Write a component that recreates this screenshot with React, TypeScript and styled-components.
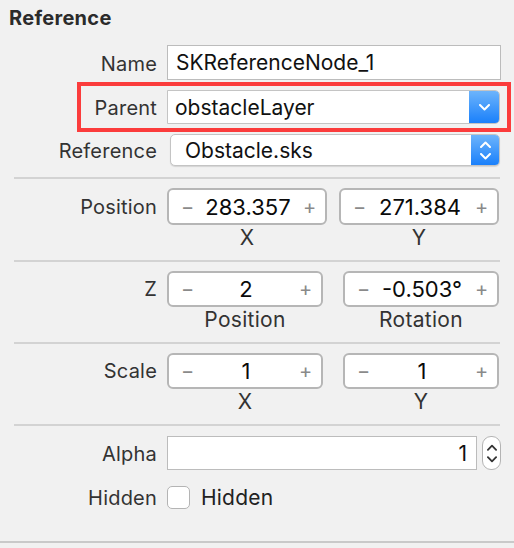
import React from 'react';
import styled, { createGlobalStyle } from 'styled-components';

const GlobalStyle = createGlobalStyle`
  body {
    margin: 0;
    background: #f1f1f1;
    font-family: Inter, "Liberation Sans", sans-serif;
  }
`;

const Panel = styled.div`
  width: 514px;
  height: 548px;
  background: #f1f1f1;
  display: flex;
  flex-direction: column;
  color: #2e2e2e;
`;

const Header = styled.div`
  height: 36px;
  line-height: 36px;
  padding-left: 9px;
  font-size: 20px;
  letter-spacing: 0.3px;
  font-weight: 700;
  color: #2b2b2b;
`;

const Row = styled.div<{ $top: number; $mark?: boolean }>`
  position: relative;
  display: grid;
  grid-template-columns: 157px 1fr;
  column-gap: 10px;
  align-items: center;
  margin-top: ${(p) => p.$top}px;
  padding-right: 13px;
  ${(p) =>
    p.$mark &&
    `
    &::after {
      content: '';
      position: absolute;
      left: 77px;
      right: 3px;
      top: -8px;
      bottom: -8px;
      border: 4px solid #fb3c3c;
      pointer-events: none;
    }
  `}
`;

const Label = styled.div`
  text-align: right;
  font-size: 20px;
  letter-spacing: 0.2px;
  color: #333;
  white-space: nowrap;
  padding-top: 2px;
`;

const TextField = styled.div<{ $align?: string; $width?: number }>`
  box-sizing: border-box;
  height: ${(p) => (p.$width ? 34 : 35)}px;
  width: ${(p) => (p.$width ? `${p.$width}px` : 'auto')};
  background: #fff;
  border: 1px solid #bcbcbc;
  padding: 0 9px 0 8px;
  display: flex;
  align-items: center;
  justify-content: ${(p) => p.$align || 'flex-start'};
  font-size: 21px;
  color: #111;
`;

const Popup = styled.div<{ $rounded?: boolean }>`
  box-sizing: border-box;
  height: ${(p) => (p.$rounded ? 32 : 34)}px;
  margin: ${(p) => (p.$rounded ? '0 1px 0 3px' : '0 1px 0 0')};
  display: flex;
  background: #fff;
  border: 1px solid #c4c4c4;
  border-radius: ${(p) => (p.$rounded ? '5px' : '0 5px 5px 0')};
  box-shadow: ${(p) => (p.$rounded ? '0 1px 1px rgba(0,0,0,0.12)' : 'none')};
  overflow: hidden;
`;

const PopupText = styled.div<{ $indent: number }>`
  flex: 1;
  display: flex;
  align-items: center;
  padding-left: ${(p) => p.$indent}px;
  font-size: 21px;
  color: #111;
`;

const PopupArrow = styled.div<{ $w: number; $double?: boolean }>`
  width: ${(p) => p.$w}px;
  display: flex;
  flex-direction: ${(p) => (p.$double ? 'column' : 'row')};
  gap: 5px;
  align-items: center;
  justify-content: center;
  background: linear-gradient(#6db4fb, #1a80fb);
`;

const Divider = styled.div<{ $top: number; $full?: boolean }>`
  height: 2px;
  background: ${(p) => (p.$full ? '#c9c9c9' : '#d3d3d3')};
  margin: ${(p) => p.$top}px ${(p) => (p.$full ? '0' : '14px')} 0 ${(p) => (p.$full ? '0' : '14px')};
`;

const Pair = styled.div`
  display: flex;
  justify-content: space-between;
  margin-right: 2px;
`;

const Column = styled.div`
  display: flex;
  flex-direction: column;
  align-items: center;
`;

const Stepper = styled.div<{ $w: number; $h: number }>`
  box-sizing: border-box;
  width: ${(p) => p.$w}px;
  height: ${(p) => p.$h}px;
  background: #fff;
  border: 2px solid #b6b6b6;
  border-radius: 6px;
  display: flex;
  align-items: center;
  justify-content: space-between;
  padding: 0 10px 0 12px;
`;

const StepSign = styled.span`
  font-size: 20px;
  color: #8a8a8a;
  width: 12px;
  text-align: center;
`;

const StepValue = styled.span`
  font-size: 22px;
  color: #0a0a0a;
`;

const SubLabel = styled.div`
  height: 26px;
  line-height: 26px;
  font-size: 21px;
  letter-spacing: 0.3px;
  color: #333;
`;

const StepperRow = styled.div<{ $top: number }>`
  display: grid;
  grid-template-columns: 157px 1fr;
  column-gap: 10px;
  margin-top: ${(p) => p.$top}px;
  padding-right: 13px;
`;

const StepperLabel = styled.div<{ $h: number }>`
  height: ${(p) => p.$h}px;
  display: flex;
  align-items: center;
  justify-content: flex-end;
  font-size: 20px;
  letter-spacing: 0.2px;
  color: #333;
`;

const AlphaWrap = styled.div`
  display: flex;
  align-items: center;
  gap: 5px;
`;

const RoundStepper = styled.div`
  box-sizing: border-box;
  width: 19px;
  height: 34px;
  background: #fff;
  border: 1px solid #b4b4b4;
  border-radius: 9px;
  display: flex;
  flex-direction: column;
  align-items: center;
  justify-content: center;
  gap: 5px;
`;

const CheckLine = styled.label`
  display: flex;
  align-items: center;
  gap: 11px;
  font-size: 21px;
  letter-spacing: 0.2px;
  color: #222;
`;

const CheckBox = styled.span`
  box-sizing: border-box;
  width: 23px;
  height: 23px;
  background: #fff;
  border: 1px solid #b4b4b4;
  border-radius: 5px;
`;

const Chevron = ({ up, color, w = 11 }: { up?: boolean; color: string; w?: number }) => (
  <svg width={w} height={7} viewBox="0 0 11 7">
    <path
      d={up ? 'M1 6 L5.5 1.5 L10 6' : 'M1 1 L5.5 5.5 L10 1'}
      fill="none"
      stroke={color}
      strokeWidth="2"
      strokeLinecap="round"
      strokeLinejoin="round"
    />
  </svg>
);

type StepItem = { value: string; caption: string };

const StepperPair = ({ label, width, items, top }: { label: string; width: number; items: StepItem[]; top: number }) => (
  <StepperRow $top={top}>
    <StepperLabel $h={width === 160 ? 37 : 36}>{label}</StepperLabel>
    <Pair>
      {items.map((it) => (
        <Column key={it.caption + it.value}>
          <Stepper $w={width} $h={width === 160 ? 37 : 36}>
            <StepSign>−</StepSign>
            <StepValue>{it.value}</StepValue>
            <StepSign>+</StepSign>
          </Stepper>
          <SubLabel>{it.caption}</SubLabel>
        </Column>
      ))}
    </Pair>
  </StepperRow>
);

export default function App() {
  return (
    <>
      <GlobalStyle />
      <Panel>
        <Header>Reference</Header>

        <Row $top={9}>
          <Label>Name</Label>
          <TextField>SKReferenceNode_1</TextField>
        </Row>

        <Row $top={10} $mark>
          <Label>Parent</Label>
          <Popup>
            <PopupText $indent={7}>obstacleLayer</PopupText>
            <PopupArrow $w={30}>
              <Chevron color="#fff" />
            </PopupArrow>
          </Popup>
        </Row>

        <Row $top={10}>
          <Label>Reference</Label>
          <Popup $rounded>
            <PopupText $indent={14}>Obstacle.sks</PopupText>
            <PopupArrow $w={28} $double>
              <Chevron up color="#fff" />
              <Chevron color="#fff" />
            </PopupArrow>
          </Popup>
        </Row>

        <Divider $top={11} />

        <StepperPair
          label="Position"
          width={160}
          top={9}
          items={[
            { value: '283.357', caption: 'X' },
            { value: '271.384', caption: 'Y' },
          ]}
        />

        <Divider $top={9} />

        <StepperPair
          label="Z"
          width={156}
          top={9}
          items={[
            { value: '2', caption: 'Position' },
            { value: '-0.503°', caption: 'Rotation' },
          ]}
        />

        <Divider $top={9} />

        <StepperPair
          label="Scale"
          width={156}
          top={9}
          items={[
            { value: '1', caption: 'X' },
            { value: '1', caption: 'Y' },
          ]}
        />

        <Divider $top={9} />

        <Row $top={10}>
          <Label>Alpha</Label>
          <AlphaWrap>
            <TextField $align="flex-end" $width={310}>1</TextField>
            <RoundStepper>
              <Chevron up color="#333" w={10} />
              <Chevron color="#333" w={10} />
            </RoundStepper>
          </AlphaWrap>
        </Row>

        <Row $top={14}>
          <Label>Hidden</Label>
          <CheckLine>
            <CheckBox />
            Hidden
          </CheckLine>
        </Row>

        <Divider $top={31} $full />
      </Panel>
    </>
  );
}
